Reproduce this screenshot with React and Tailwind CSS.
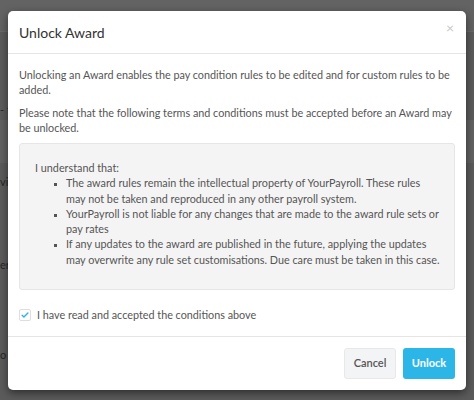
import React from "react";

const terms = [
  "The award rules remain the intellectual property of YourPayroll. These rules may not be taken and reproduced in any other payroll system.",
  "YourPayroll is not liable for any changes that are made to the award rule sets or pay rates",
  "If any updates to the award are published in the future, applying the updates may overwrite any rule set customisations. Due care must be taken in this case.",
];

// faint rows of the page that sits behind the overlay
const PageBehind = () => (
  <div className="flex h-full flex-col bg-[#5b5b5b] text-[11px] text-[#262626]">
    <div className="h-[32px] shrink-0 border-b border-[#6a6a6a] bg-[#636363]" />
    <div className="h-[68px] shrink-0" />
    <div className="flex h-[20px] shrink-0 items-center">- t</div>
    <div className="h-[43px] shrink-0 bg-[#626262]" />
    <div className="flex h-[38px] shrink-0 items-center">vi</div>
    <div className="h-[44px] shrink-0" />
    <div className="flex h-[40px] shrink-0 items-center">er</div>
    <div className="h-[50px] shrink-0" />
    <div className="flex h-[40px] shrink-0 items-center">o</div>
  </div>
);

const App = () => {
  return (
    <div
      className="relative h-[400px] w-[474px] overflow-hidden"
      style={{ fontFamily: "Lato, 'Open Sans', sans-serif" }}
    >
      <PageBehind />

      {/* Modal overlay */}
      <div className="absolute inset-0 flex items-start justify-center pt-[11px]">
        <div className="w-[458px] rounded-[5px] bg-white shadow-[0_3px_9px_rgba(0,0,0,0.5)]">
          {/* Header */}
          <div className="flex h-[43px] items-center justify-between border-b border-[#e5e5e5] pl-[11px] pr-[12px]">
            <h4 className="text-[14px] text-[#333]">Unlock Award</h4>
            <button className="-mt-[8px] text-[14px] leading-none text-[#c8c8c8]">×</button>
          </div>

          {/* Body */}
          <div className="px-[11px] pt-[13px] pb-[14px] text-[10.8px] leading-[15px] text-[#555]">
            <p>
              Unlocking an Award enables the pay condition rules to be edited
              and for custom rules to be added.
            </p>
            <p className="mt-[8px]">
              Please note that the following terms and conditions must be
              accepted before an Award may be unlocked.
            </p>

            <div className="mt-[8px] rounded-[3px] border border-[#e6e6e6] bg-[#f4f4f4] pl-[15px] pr-[12px] pt-[16px] pb-[22px] leading-[15.3px]">
              <p>I understand that:</p>
              <ul className="list-[square] pl-[31px] marker:text-[8px]">
                {terms.map((t) => (
                  <li key={t}>{t}</li>
                ))}
              </ul>
            </div>

            <label className="mt-[17px] flex items-center gap-[6px]">
              <span className="flex h-[12px] w-[12px] items-center justify-center rounded-[2px] border border-[#e2dcdc] bg-white">
                <svg viewBox="0 0 12 12" className="h-[10px] w-[10px]">
                  <path
                    d="M2.5 6.3l2.2 2.2 4.8-5"
                    fill="none"
                    stroke="#2bb3e6"
                    strokeWidth="1.6"
                    strokeLinecap="round"
                    strokeLinejoin="round"
                  />
                </svg>
              </span>
              <span>I have read and accepted the conditions above</span>
            </label>
          </div>

          {/* Footer */}
          <div className="flex justify-end gap-[7px] border-t border-[#e5e5e5] px-[11px] py-[11px]">
            <button className="h-[31px] w-[52px] rounded-[3px] border border-[#e8e8e8] bg-[#f3f4f5] text-[11px] font-semibold text-[#555]">
              Cancel
            </button>
            <button className="h-[31px] w-[52px] rounded-[3px] bg-[#2cb6e8] text-[11px] font-bold text-white">
              Unlock
            </button>
          </div>
        </div>
      </div>
    </div>
  );
};

export default App;
